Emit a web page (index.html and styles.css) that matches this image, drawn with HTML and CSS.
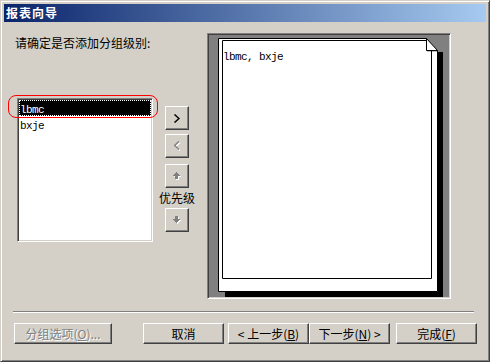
FILE: index.html
```html
<!DOCTYPE html>
<html lang="zh-CN">
<head>
    <meta charset="UTF-8">
    <title>报表向导</title>
    <link rel="stylesheet" href="styles.css">
</head>
<body>
    <div class="window">
        <div class="titlebar">报表向导</div>

        <div class="main">
            <div class="left-col">
                <div class="prompt">请确定是否添加分组级别:</div>
                <div class="listbox">
                    <div class="list-item selected">lbmc</div>
                    <div class="list-item">bxje</div>
                    <span class="mark"></span>
                </div>
            </div>

            <div class="mover-col">
                <button class="btn tool">
                    <svg width="6" height="9" viewBox="0 0 6 9"><path d="M0.5 0.5 L5 4.5 L0.5 8.5" fill="none" stroke="#000" stroke-width="1.5"/></svg>
                </button>
                <button class="btn tool second" disabled>
                    <svg width="7" height="10" viewBox="0 0 7 10">
                        <path d="M6 1.5 L1.5 5.5 L6 9.5" fill="none" stroke="#fff" stroke-width="1.5"/>
                        <path d="M5 0.5 L0.5 4.5 L5 8.5" fill="none" stroke="#808080" stroke-width="1.5"/>
                    </svg>
                </button>
                <button class="btn tool third" disabled>
                    <svg width="8" height="8" viewBox="0 0 8 8">
                        <path d="M4 1h1v1h-1z M3 2h3v1h-3z M2 3h5v1h-5z M1 4h7v1h-7z M3 5h3v3h-3z" fill="#fff"/>
                        <path d="M3 0h1v1h-1z M2 1h3v1h-3z M1 2h5v1h-5z M0 3h7v1h-7z M2 4h3v3h-3z" fill="#808080"/>
                    </svg>
                </button>
                <div class="priority">优先级</div>
                <button class="btn tool" disabled>
                    <svg width="8" height="8" viewBox="0 0 8 8">
                        <path d="M3 1h3v3h-3z M1 4h7v1h-7z M2 5h5v1h-5z M3 6h3v1h-3z M4 7h1v1h-1z" fill="#fff"/>
                        <path d="M2 0h3v3h-3z M0 3h7v1h-7z M1 4h5v1h-5z M2 5h3v1h-3z M3 6h1v1h-1z" fill="#808080"/>
                    </svg>
                </button>
            </div>

            <div class="preview">
                <svg class="page-art" width="240" height="262" viewBox="0 0 240 262">
                    <rect x="229" y="17" width="5" height="245" fill="#000"/>
                    <rect x="16" y="257" width="218" height="5" fill="#000"/>
                    <path d="M9.5 3.5 H217.5 L228.5 15.5 V256.5 H9.5 Z" fill="#fff" stroke="#000"/>
                    <rect x="218" y="16" width="10" height="1" fill="#c0c0c0"/>
                    <path d="M217.5 3.5 V15.5 H228.5" fill="none" stroke="#000"/>
                    <path d="M222.5 16 V243.5 H13.5 V5.5 H217" fill="none" stroke="#000"/>
                </svg>
                <div class="preview-text">lbmc, bxje</div>
            </div>
        </div>

        <div class="separator"></div>

        <div class="buttons">
            <button class="btn wide" disabled>分组选项(<u>O</u>)...</button>
            <button class="btn cancel">取消</button>
            <button class="btn back">&lt; 上一步(<u>B</u>)</button>
            <button class="btn">下一步(<u>N</u>) &gt;</button>
            <button class="btn finish">完成(<u>F</u>)</button>
        </div>
    </div>
</body>
</html>
```

FILE: styles.css
```css
body {
    margin: 0;
    font-family: "Noto Sans CJK SC", sans-serif;
    font-size: 12px;
}
.window {
    width: 490px;
    height: 362px;
    box-sizing: border-box;
    background-color: #d4d0c8;
    border: 1px solid;
    border-color: #d4d0c8 #404040 #404040 #d4d0c8;
    box-shadow: inset 1px 1px 0 #fff, inset -1px -1px 0 #808080;
    padding: 3px;
}
.titlebar {
    height: 18px;
    line-height: 18px;
    padding-left: 2px;
    background: linear-gradient(to right, #0a246a, #a6caf0);
    color: #fff;
    font-weight: bold;
    letter-spacing: 1px;
}
.main {
    display: flex;
    align-items: flex-start;
}
.left-col {
    width: 138px;
    margin-left: 11px;
    margin-top: 14px;
}
.prompt {
    height: 14px;
    line-height: 14px;
    white-space: nowrap;
}
.listbox {
    position: relative;
    width: 136px;
    height: 144px;
    box-sizing: border-box;
    margin-top: 48px;
    margin-left: 2px;
    padding: 1px;
    background-color: #fff;
    border: 1px solid;
    border-color: #808080 #fff #fff #808080;
    box-shadow: inset 1px 1px 0 #404040, inset -1px -1px 0 #d4d0c8;
}
.list-item {
    height: 16px;
    padding-left: 1px;
    line-height: 20px;
    font-family: "Liberation Mono", monospace;
    font-size: 11px;
    letter-spacing: -0.6px;
}
.list-item.selected {
    background-color: #000;
    color: #fff;
    outline: 1px dotted #fff;
    outline-offset: -1px;
}
.mark {
    position: absolute;
    left: -10px;
    top: -4px;
    width: 150px;
    height: 23px;
    box-sizing: border-box;
    border: 1px solid #f00;
    border-radius: 8px;
}
.btn {
    box-sizing: border-box;
    height: 21px;
    width: 81px;
    padding: 0;
    background-color: #d4d0c8;
    border: 1px solid;
    border-color: #fff #404040 #404040 #fff;
    box-shadow: inset -1px -1px 0 #808080;
    font-family: "Noto Sans CJK SC", sans-serif;
    font-size: 12px;
    color: #000;
}
.btn:disabled {
    color: #808080;
    text-shadow: 1px 1px 0 #fff;
}
.mover-col {
    display: flex;
    flex-direction: column;
    align-items: center;
    width: 24px;
    margin-left: 12px;
    margin-top: 84px;
}
.tool {
    width: 24px;
    height: 24px;
    display: flex;
    align-items: center;
    justify-content: center;
}
.tool.second {
    margin-top: 4px;
}
.tool.third {
    margin-top: 6px;
}
.priority {
    height: 20px;
    line-height: 20px;
    white-space: nowrap;
}
.preview {
    position: relative;
    width: 244px;
    height: 266px;
    box-sizing: border-box;
    margin-left: 18px;
    margin-top: 11px;
    padding: 17px 0 0 15px;
    background-color: #808080;
    border: 1px solid;
    border-color: #808080 #fff #fff #808080;
    box-shadow: inset 1px 1px 0 #404040, inset -1px -1px 0 #d4d0c8;
}
.page-art {
    position: absolute;
    left: 1px;
    top: 1px;
}
.preview-text {
    position: relative;
    line-height: 12px;
    font-family: "Liberation Mono", monospace;
    font-size: 11px;
    letter-spacing: -0.6px;
}
.separator {
    width: 461px;
    margin-top: 12px;
    margin-left: 9px;
    border-top: 1px solid #808080;
    border-bottom: 1px solid #fff;
}
.buttons {
    display: flex;
    margin-top: 10px;
    margin-left: 10px;
}
.btn.wide {
    width: 98px;
}
.btn.cancel {
    margin-left: 31px;
}
.btn.back {
    margin-left: 4px;
}
.btn.finish {
    margin-left: 6px;
}
```
